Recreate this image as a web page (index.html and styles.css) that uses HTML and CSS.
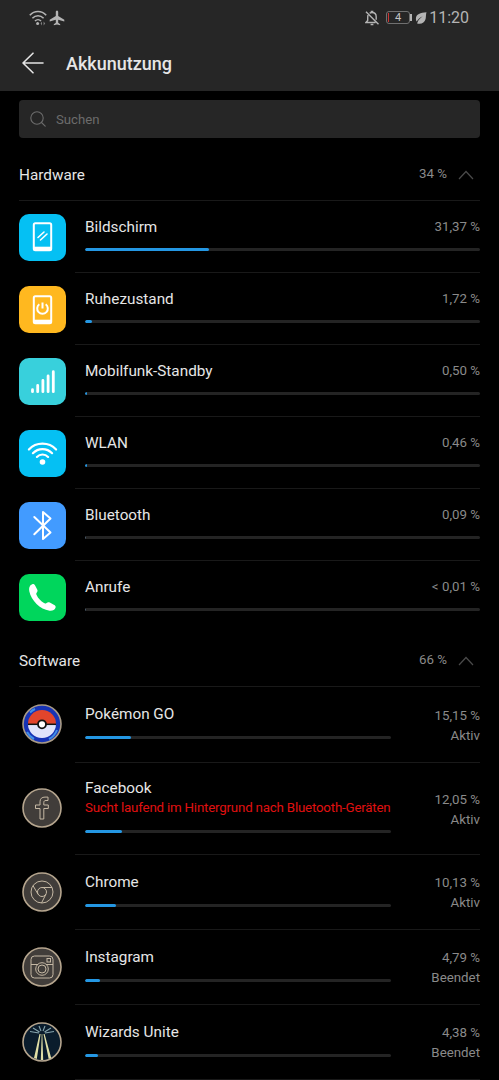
FILE: index.html
```
<!DOCTYPE html>
<html lang="de">
<head>
    <meta charset="UTF-8">
    <meta name="viewport" content="width=device-width, initial-scale=1.0">
    <title>Akkunutzung</title>
    <link rel="stylesheet" href="styles.css">
</head>
<body>
    <header class="top">
        <div class="status-bar">
            <div class="status-left">
                <svg width="18" height="16" viewBox="0 0 18 16" fill="none" stroke="#b4b4b4" stroke-width="1.6">
                    <path d="M.8 5.2C5.4.3 12.6.3 17.2 5.2M3.4 8.2c3.2-3.300 8-3.300 11.200 0M6 11c1.700-1.700 4.300-1.700 6 0"/>
                    <circle cx="8.600" cy="13.600" r="1.500" fill="#b4b4b4" stroke="none"/>
                    <path d="M13 11.500l-1.400 2 1.400 2zM14.600 11.500l1.600 2-1.600 2z" fill="#808080" stroke="none"/>
                </svg>
                <svg width="16" height="16" viewBox="0 0 16 16" fill="#b4b4b4">
                    <path d="M8 .5c.8 0 1.200.8 1.200 1.600v4L15.300 9.800v1.600L9.200 9.700v3.100l2 1.500v1L8 14.600l-3.200.7v-1l2-1.500V9.700L.7 11.400V9.800L6.800 6.100v-4C6.800 1.300 7.200.5 8 .5z"/>
                </svg>
            </div>
            <div class="status-right">
                <svg width="15" height="16" viewBox="0 0 15 16" fill="none" stroke="#b4b4b4" stroke-width="1.400">
                    <path d="M1 1.700l12.500 12.600M4.600 3.300C5.400 2.700 6 2.500 7 2.500c2.600 0 4.200 1.900 4.200 4.300v3M2.900 5.200c-.2 1-.2 4.200-.2 5.200L1 12.500h9.500"/>
                    <path d="M5.700 1.400h2.600M5.600 14.500h2.800"/>
                </svg>
                <div class="battery"><span>4</span></div>
                <svg class="leaf" width="12" height="12" viewBox="0 0 12 12">
                    <path d="M11.500.3C5.500.8.8 2.300.9 6.900c0 1.100.3 1.900.8 2.500C2.900 7.500 5 5.600 7.800 4.300 5.500 6 3.300 8 2.500 10.200l-.4 1.300c4 1 7.500-.4 8.500-4.500.5-2.300.2-4.600.9-6.700z" fill="#b4b4b4"/>
                </svg>
                <span class="clock">11:20</span>
            </div>
        </div>
        <div class="title-bar">
            <svg width="22" height="22" viewBox="0 0 22 22" fill="none" stroke="#e4e4e4" stroke-width="1.600" stroke-linecap="round" stroke-linejoin="round">
                <path d="M21 11H1M11 1.200L1 11l10 9.800"/>
            </svg>
            <h1>Akkunutzung</h1>
        </div>
    </header>

    <main class="content">
        <div class="search">
            <svg width="16" height="16" viewBox="0 0 16 16" fill="none" stroke="#6c6c6c" stroke-width="1.100" stroke-linecap="round">
                <circle cx="7" cy="7" r="6.200"/>
                <path d="M11.500 11.500l3.700 3.700"/>
            </svg>
            <span>Suchen</span>
        </div>

        <!-- Hardware -->
        <section class="hardware">
            <div class="section-head">
                <h2>Hardware</h2>
                <span class="sum">34 %</span>
                <svg width="16" height="10" viewBox="0 0 16 10" fill="none" stroke="#4a4a4a" stroke-width="1.200"><path d="M1 9l7-7.500L15 9"/></svg>
            </div>
            <div class="row">
                <div class="icon screen">
                    <svg width="47" height="47" viewBox="0 0 47 47" fill="none" stroke="#fff" stroke-width="2">
                        <rect x="14.800" y="9.300" width="17.400" height="27" rx="1.500"/>
                        <path d="M15 34.700h17" stroke-width="4"/>
                        <path d="M19 23.500l6-5.500M21.500 26l6.500-6" stroke-width="1.600" stroke-linecap="round"/>
                    </svg>
                </div>
                <div class="body">
                    <div class="line"><span class="name">Bildschirm</span><span class="value">31,37 %</span></div>
                    <div class="bar"><div class="fill" style="width: 31.37%"></div></div>
                </div>
            </div>
            <div class="row">
                <div class="icon sleep">
                    <svg width="47" height="47" viewBox="0 0 47 47" fill="none" stroke="#fff" stroke-width="2">
                        <rect x="14.800" y="10.300" width="17.400" height="27" rx="1.500"/>
                        <path d="M15 35.700h17" stroke-width="4"/>
                        <path d="M20.300 18.300a5.300 5.300 0 1 0 6.400 0M23.500 16.500v6"/>
                    </svg>
                </div>
                <div class="body">
                    <div class="line"><span class="name">Ruhezustand</span><span class="value">1,72 %</span></div>
                    <div class="bar"><div class="fill" style="width: 1.72%"></div></div>
                </div>
            </div>
            <div class="row">
                <div class="icon mobile">
                    <svg width="47" height="47" viewBox="0 0 47 47" stroke="#fff" stroke-width="2.800" stroke-linecap="round">
                        <path d="M13.500 31.700v2M18.700 27.500v6.200M23.900 22.500v11.200M29.100 18v15.700M34.300 13.700v20"/>
                    </svg>
                </div>
                <div class="body">
                    <div class="line"><span class="name">Mobilfunk-Standby</span><span class="value">0,50 %</span></div>
                    <div class="bar"><div class="fill" style="width: 0.5%"></div></div>
                </div>
            </div>
            <div class="row">
                <div class="icon wlan">
                    <svg width="47" height="47" viewBox="0 0 47 47" fill="none" stroke="#fff" stroke-width="2.200" stroke-linecap="round">
                        <path d="M9.900 19.500c7.200-7.800 20-7.800 27.200 0M13.900 23.200c5.300-5.500 13.900-5.500 19.200 0M17.900 26.900c3.100-3.200 8.100-3.200 11.200 0"/>
                        <circle cx="23.500" cy="32" r="2.800" fill="#fff" stroke="none"/>
                    </svg>
                </div>
                <div class="body">
                    <div class="line"><span class="name">WLAN</span><span class="value">0,46 %</span></div>
                    <div class="bar"><div class="fill" style="width: 0.46%"></div></div>
                </div>
            </div>
            <div class="row">
                <div class="icon bluetooth">
                    <svg width="47" height="47" viewBox="0 0 47 47" fill="none" stroke="#fff" stroke-width="2" stroke-linecap="round" stroke-linejoin="round">
                        <path d="M15.300 15L31.500 30.500 24 37V10l7.500 6.500L15.300 32.200"/>
                    </svg>
                </div>
                <div class="body">
                    <div class="line"><span class="name">Bluetooth</span><span class="value">0,09 %</span></div>
                    <div class="bar"><div class="fill none"></div></div>
                </div>
            </div>
            <div class="row">
                <div class="icon calls">
                    <svg width="47" height="47" viewBox="0 0 47 47" fill="#fff">
                        <path d="M13.200 10.300c1.300-.5 2.200.1 2.900 1.300l2.100 3.800c.6 1.200.4 2-.4 3-.7.900-.7 1.500-.2 2.600 1.500 3.300 4.300 6.300 7.400 8.100 1 .6 1.700.5 2.600-.2 1.100-.9 1.900-1 3.200-.3l4 2.200c1.500.8 2.100 1.700 1.800 2.700-.8 2.300-3 3.500-6 3.200C21 35.500 12.200 26.500 10.300 17.300c-.6-3.200.1-5.900 2.900-7z"/>
                    </svg>
                </div>
                <div class="body">
                    <div class="line"><span class="name">Anrufe</span><span class="value">&lt; 0,01 %</span></div>
                    <div class="bar"><div class="fill none"></div></div>
                </div>
            </div>
        </section>

        <!-- Software -->
        <section class="software">
            <div class="section-head">
                <h2>Software</h2>
                <span class="sum">66 %</span>
                <svg width="16" height="10" viewBox="0 0 16 10" fill="none" stroke="#4a4a4a" stroke-width="1.200"><path d="M1 9l7-7.500L15 9"/></svg>
            </div>
            <div class="row">
                <div class="icon">
                    <svg width="40" height="40" viewBox="0 0 40 40">
                        <circle cx="20" cy="20" r="19" fill="#1733b5" stroke="#a89a86" stroke-width="1.600"/>
                        <path d="M8 8.500A16.500 16.500 0 0 1 13 5M35 26a16.500 16.500 0 0 1-8 9M5 28a16.500 16.500 0 0 0 7 7" fill="none" stroke="#3f8fe8" stroke-width="2"/>
                        <path d="M6 20a14 14 0 0 1 28 0z" fill="#e2452c"/>
                        <path d="M6 20a14 14 0 0 0 28 0z" fill="#e0e4fb"/>
                        <path d="M6 20.300h28" stroke="#111" stroke-width="1.500"/>
                        <circle cx="20" cy="20.300" r="4" fill="#fff" stroke="#111" stroke-width="1.800"/>
                    </svg>
                </div>
                <div class="body">
                    <div class="info">
                        <span class="name">Pokémon GO</span>
                        <div class="bar"><div class="fill" style="width: 15.15%"></div></div>
                    </div>
                    <div class="usage">15,15 %<br>Aktiv</div>
                </div>
            </div>
            <div class="row tall">
                <div class="icon">
                    <svg width="40" height="40" viewBox="0 0 40 40" fill="none">
                        <circle cx="20" cy="20" r="19" fill="#413d3a" stroke="#b5a58e" stroke-width="1.600"/>
                        <path d="M18 31V20.500h-4.500V17H18v-3.200c0-3.300 2-4.700 5-4.700h3v3.400h-2c-1.500 0-2.200.6-2.200 2V17h4.500v3.500h-4.500V31z" stroke="#c5b8a4"/>
                    </svg>
                </div>
                <div class="body">
                    <div class="info">
                        <span class="name">Facebook</span>
                        <span class="warning">Sucht laufend im Hintergrund nach Bluetooth-Geräten</span>
                        <div class="bar"><div class="fill" style="width: 12.05%"></div></div>
                    </div>
                    <div class="usage">12,05 %<br>Aktiv</div>
                </div>
            </div>
            <div class="row">
                <div class="icon">
                    <svg width="40" height="40" viewBox="0 0 40 40" fill="none">
                        <circle cx="20" cy="20" r="19" fill="#413d3a" stroke="#b5a58e" stroke-width="1.600"/>
                        <g stroke="#c5b8a4">
                            <circle cx="20" cy="20" r="11"/>
                            <circle cx="20" cy="20" r="4.500"/>
                            <path d="M20 15.500h10M16.100 22.300L11 13.700M23.900 22.300L19.500 31"/>
                        </g>
                    </svg>
                </div>
                <div class="body">
                    <div class="info">
                        <span class="name">Chrome</span>
                        <div class="bar"><div class="fill" style="width: 10.13%"></div></div>
                    </div>
                    <div class="usage">10,13 %<br>Aktiv</div>
                </div>
            </div>
            <div class="row">
                <div class="icon">
                    <svg width="40" height="40" viewBox="0 0 40 40" fill="none">
                        <circle cx="20" cy="20" r="19" fill="#413d3a" stroke="#b5a58e" stroke-width="1.600"/>
                        <g stroke="#c5b8a4">
                            <rect x="9" y="9" width="22" height="22" rx="3.500"/>
                            <path d="M9 17.500h7M24 17.500h7"/>
                            <circle cx="20" cy="22" r="6.300"/>
                            <circle cx="20" cy="22" r="4"/>
                            <rect x="25" y="11.500" width="3.500" height="3.500"/>
                        </g>
                    </svg>
                </div>
                <div class="body">
                    <div class="info">
                        <span class="name">Instagram</span>
                        <div class="bar"><div class="fill" style="width: 4.79%"></div></div>
                    </div>
                    <div class="usage">4,79 %<br>Beendet</div>
                </div>
            </div>
            <div class="row">
                <div class="icon">
                    <svg width="40" height="40" viewBox="0 0 40 40">
                        <circle cx="20" cy="20" r="19" fill="#0a1c2c" stroke="#b5a58e" stroke-width="1.600"/>
                        <path d="M17.500 12L12 36l2.800 1L18.600 12zM21.500 12l5.200 25 2.500-1L22.600 12zM19.700 12l-.9 26h2.400l-.9-26z" fill="#e0dfa6"/>
                        <path d="M8 9.500l9 1.500M11 6l6.500 4M17 4l2 5M23 4l-2 5M29 6l-6.500 4M32 9.500L23 11" stroke="#86a5ae" stroke-width="1.100"/>
                    </svg>
                </div>
                <div class="body">
                    <div class="info">
                        <span class="name">Wizards Unite</span>
                        <div class="bar"><div class="fill" style="width: 4.38%"></div></div>
                    </div>
                    <div class="usage">4,38 %<br>Beendet</div>
                </div>
            </div>
        </section>
    </main>
</body>
</html>
```
FILE: styles.css
```
* {
    box-sizing: border-box;
}

body {
    margin: 0;
    background-color: #000;
    color: #e6e6e6;
    font-family: Roboto, "Liberation Sans", sans-serif;
    font-size: 15.3px;
}

svg {
    display: block;
    flex-shrink: 0;
}

/* Kopfbereich */
.top {
    height: 91px;
    background-color: #262626;
}

.status-bar {
    display: flex;
    justify-content: space-between;
    height: 35px;
    padding: 0 30px 0 29px;
}

.status-left,
.status-right {
    display: flex;
    align-items: center;
}

.status-left {
    gap: 2px;
}

.battery {
    display: flex;
    align-items: center;
    justify-content: center;
    position: relative;
    width: 24px;
    height: 13px;
    margin-left: 6px;
    border: 1px solid #707070;
    border-radius: 3px;
    background: linear-gradient(#c33, #c33) 1px 1px / 1px 9px no-repeat;
    color: #c4c4c4;
    font-size: 11px;
}

/* Pluspol der Batterie */
.battery::after {
    content: "";
    position: absolute;
    right: -3px;
    top: 2px;
    width: 2px;
    height: 7px;
    background-color: #b4b4b4;
}

.leaf {
    margin-left: 5px;
}

.clock {
    margin-left: 2px;
    color: #b4b4b4;
    font-size: 16px;
}

.title-bar {
    display: flex;
    align-items: center;
    gap: 22px;
    height: 56px;
    padding-left: 22px;
}

h1 {
    margin: 0;
    font-size: 18px;
    font-weight: 500;
}

/* Suche */
.content {
    padding: 9px 19px 0;
}

.search {
    display: flex;
    align-items: center;
    gap: 10px;
    height: 38px;
    padding-left: 11px;
    border-radius: 4px;
    background-color: #262626;
    color: #6c6c6c;
    font-size: 13.2px;
}

/* Abschnitte */
.section-head {
    display: flex;
    align-items: center;
    height: 63px;
    padding: 11px 6px 0 0;
    border-bottom: 1px solid #191919;
}

.software .section-head {
    height: 54px;
    padding-top: 2px;
}

h2 {
    flex: 1;
    margin: 0;
    font-size: 15.3px;
    font-weight: 400;
}

.sum {
    margin: 0 11px 2px 0;
    color: #8a8a8a;
    font-size: 13.3px;
}

.row {
    display: flex;
    height: 72px;
}

.icon {
    display: flex;
    align-items: center;
    justify-content: center;
    flex-shrink: 0;
    width: 47px;
    height: 47px;
    margin: 13px 9px 0 0;
    border-radius: 10px;
}

.screen, .wlan {
    background-color: #05c0f3;
}

.sleep {
    background-color: #ffb81f;
}

.mobile {
    background-color: #38d0dc;
}

.bluetooth {
    background-color: #429bff;
}

.calls {
    background-color: #00d65c;
}

.body {
    flex: 1;
    padding: 16px 0 0 10px;
    border-bottom: 1px solid #191919;
}

.hardware .row:last-child .body {
    border-bottom: none;
}

.line {
    display: flex;
    justify-content: space-between;
}

.name {
    display: block;
    font-size: 15.3px;
    line-height: 20px;
}

.value {
    color: #8a8a8a;
    font-size: 13.3px;
    line-height: 20px;
}

.bar {
    height: 3px;
    margin-top: 11px;
    border-radius: 2px;
    background-color: #242424;
    overflow: hidden;
}

.fill {
    height: 100%;
    border-radius: 2px;
    background-color: #2497e3;
}

/* Verbrauch nahe null: nur ein schwacher Strich */
.none {
    width: 1px;
    background-color: #4a5a68;
}

/* Apps */
.software .row {
    height: 75px;
}

.software .row:nth-child(2) {
    height: 76px;
}

.software .tall {
    height: 92px !important;
}

.software .icon {
    height: auto;
    margin-top: 0;
    padding: 0 1px 2px 0;
}

.software .body {
    display: flex;
    justify-content: space-between;
    align-items: center;
    padding-top: 0;
}

.info {
    width: 306px;
    padding-bottom: 6px;
}

.software .bar {
    margin-top: 12px;
}

.warning {
    display: block;
    color: #e01010;
    font-size: 13.3px;
    letter-spacing: -0.19px;
    line-height: 20px;
    white-space: nowrap;
}

.usage {
    padding-top: 2px;
    color: #8a8a8a;
    font-size: 13.3px;
    line-height: 20px;
    text-align: right;
}
```
